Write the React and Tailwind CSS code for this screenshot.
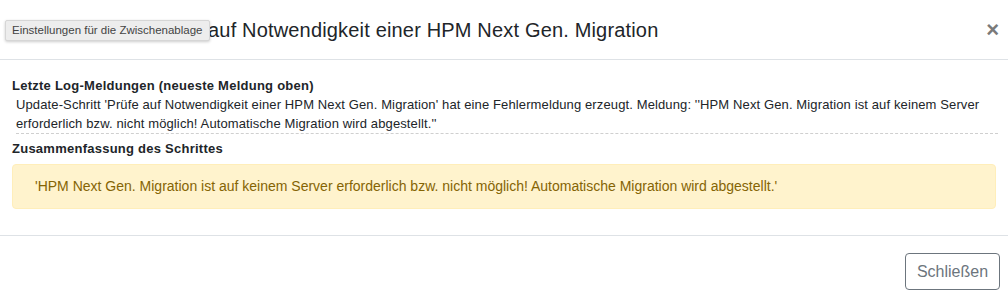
export default function App() {
  return (
    <div className="relative w-[1008px] h-[304px] bg-white text-[#212529] font-['Liberation_Sans',Arial,sans-serif]">
      <div className="flex items-center justify-between h-[60px] border-b border-[#dee2e6] pl-[12px] pr-[9px]">
        <h5 className="text-[20px] font-medium leading-[24px] tracking-[0.17px] whitespace-nowrap">
          Update-Schritt: Prüfe auf Notwendigkeit einer HPM Next Gen. Migration
        </h5>
        <button className="text-[22px] font-bold leading-none text-[#7a7a7a]">×</button>
      </div>

      <div className="absolute left-[5px] top-[20px] px-[6px] h-[21px] flex items-center bg-[#ededed] border border-[#d6d6d6] rounded-[2px] shadow-[0_1px_3px_rgba(0,0,0,0.2)] text-[11.5px] text-[#444]">
        Einstellungen für die Zwischenablage
      </div>

      <div className="px-[12px] pt-[16px] pb-[26px] text-[13px] leading-[19px]">
        <div className="font-bold tracking-[0.25px]">Letzte Log-Meldungen (neueste Meldung oben)</div>
        <div className="ml-[4px] mr-[-2px] border-b border-dashed border-[#cfcfcf] tracking-[0.12px]">
          Update-Schritt 'Prüfe auf Notwendigkeit einer HPM Next Gen. Migration' hat eine Fehlermeldung erzeugt. Meldung: ''HPM Next Gen. Migration ist auf keinem Server erforderlich bzw. nicht möglich! Automatische Migration wird abgestellt.''
        </div>
        <div className="font-bold tracking-[0.25px] mt-[5px]">Zusammenfassung des Schrittes</div>
        <div className="mt-[6px] h-[45px] flex items-center px-[22px] bg-[#fff3cd] border border-[#ffeeba] rounded-[4px] text-[14px] text-[#856404]">
          'HPM Next Gen. Migration ist auf keinem Server erforderlich bzw. nicht möglich! Automatische Migration wird abgestellt.'
        </div>
      </div>

      <div className="flex justify-end border-t border-[#dee2e6] pt-[17px] pr-[8px]">
        <button className="w-[95px] h-[37px] border border-[#6c757d] rounded-[4px] text-[16px] text-[#6c757d]">
          Schließen
        </button>
      </div>
    </div>
  );
}
